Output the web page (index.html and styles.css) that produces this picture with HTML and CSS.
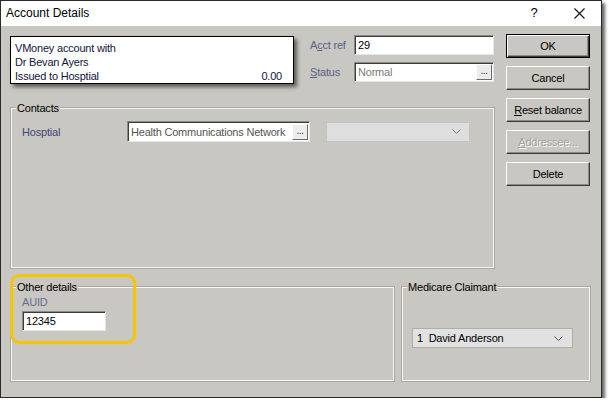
FILE: index.html
```html
<!DOCTYPE html>
<html>
<head>
<meta charset="utf-8">
<title>Account Details</title>
<link rel="stylesheet" href="styles.css">
</head>
<body>
<div class="window">
  <div class="titlebar">
    <span class="title">Account Details</span>
    <span class="tb-help">?</span>
    <span class="tb-close"><svg width="11" height="11" viewBox="0 0 11 11"><path d="M0.5 0.5 L10.5 10.5 M10.5 0.5 L0.5 10.5" stroke="#111" stroke-width="1.1" fill="none"/></svg></span>
  </div>
  <div class="content">
    <div class="top">
      <div class="left">
        <div class="row1">
          <div class="infobox">
            <div>VMoney account with</div>
            <div>Dr Bevan Ayers</div>
            <div class="line3"><span>Issued to Hosptial</span><span>0.00</span></div>
          </div>
          <div class="fields">
            <div class="frow">
              <span class="lbl">A<u>c</u>ct ref</span>
              <div class="field"><span class="ftext">29</span></div>
            </div>
            <div class="frow">
              <span class="lbl"><u>S</u>tatus</span>
              <div class="field"><span class="ftext muted">Normal</span><span class="dots">...</span></div>
            </div>
          </div>
        </div>
        <fieldset class="group contacts">
          <legend>Contacts</legend>
          <div class="contacts-body">
            <span class="lbl hosp">Hosptial</span>
            <div class="field wide"><span class="ftext grey">Health Communications Network</span><span class="dots">...</span></div>
            <div class="select disabled"><span class="stext"></span><svg class="chev" width="9" height="5" viewBox="0 0 9 5"><path d="M0.5 0.5 L4.5 4.5 L8.5 0.5" stroke="#777" fill="none"/></svg></div>
          </div>
        </fieldset>
      </div>
      <div class="buttons">
        <div class="btn default">OK</div>
        <div class="btn">Cancel</div>
        <div class="btn"><u>R</u>eset balance</div>
        <div class="btn off"><u>A</u>ddressee...</div>
        <div class="btn">Delete</div>
      </div>
    </div>
    <div class="bottom">
      <fieldset class="group other">
        <legend>Other details</legend>
        <div class="other-body">
          <div class="lbl auid">AUID</div>
          <div class="field auid-field"><span class="ftext">12345</span></div>
        </div>
      </fieldset>
      <fieldset class="group medicare">
        <legend>Medicare Claimant</legend>
        <div class="medicare-body">
          <div class="select claimant"><span class="stext">1&nbsp;&nbsp;David Anderson</span><svg class="chev" width="9" height="5" viewBox="0 0 9 5"><path d="M0.5 0.5 L4.5 4.5 L8.5 0.5" stroke="#555" fill="none"/></svg></div>
        </div>
      </fieldset>
    </div>
  </div>
  <div class="highlight"></div>
</div>
</body>
</html>
```
FILE: styles.css
```css
* { box-sizing: border-box; }
html, body { margin: 0; padding: 0; background: #ffffff; }
body {
  font-family: "Liberation Sans", Arial, sans-serif;
  font-size: 11px;
  line-height: 14px;
  letter-spacing: -0.2px;
  color: #000;
}
.window {
  position: relative;
  width: 602px;
  height: 398px;
  border: 1px solid #2a2a2a;
  background: #c9c7c1;
  box-shadow: 3px 3px 3px 0 rgba(0,0,0,0.6);
}
.titlebar {
  height: 25px;
  background: #ffffff;
  display: flex;
  align-items: center;
  padding: 0 7px 0 5px;
}
.title { font-size: 12px; letter-spacing: 0; color: #000; margin-top: -1px; }
.tb-help {
  margin-left: auto;
  width: 28px;
  text-align: center;
  font-size: 13px;
  margin-top: -1px;
}
.tb-close {
  width: 30px;
  margin-left: 16px;
  display: flex;
  justify-content: center;
  align-items: center;
  height: 25px;
}
.tb-close svg { display: block; margin-top: -1px; }

.content { padding: 8px 10px 0 10px; }
.top { display: flex; }
.left { width: 483px; }
.row1 { display: flex; height: 50px; }
.infobox {
  margin-top: 2px;
  margin-left: -1px;
  width: 284px;
  height: 48px;
  background: #fff;
  border: 1px solid #000;
  box-shadow: 3px 3px 4px rgba(0,0,0,0.55);
  padding: 4px 11px 0 4px;
  color: #141438;
}
.line3 { display: flex; justify-content: space-between; }
.fields {
  margin-left: 16px;
  margin-top: 1px;
  display: flex;
  flex-direction: column;
  gap: 7px;
}
.frow { display: flex; align-items: center; height: 20px; }
.lbl { color: #5a5e88; }
.frow .lbl { width: 44px; }
.field {
  height: 20px;
  width: 140px;
  background: #fff;
  border: 1px solid;
  border-color: #8a8a8a #e6e6e6 #e6e6e6 #8a8a8a;
  box-shadow: inset 1px 1px 0 #3c3c3c;
  display: flex;
  align-items: center;
  padding: 0 1px 0 3px;
}
.ftext { flex: 1; white-space: nowrap; overflow: hidden; }
.muted { color: #7a7a7a; }
.grey { color: #555; }
.dots {
  width: 16px;
  height: 16px;
  flex: none;
  background: #ececec;
  border: 1px solid;
  border-color: #fff #6a6a6a #6a6a6a #fff;
  font-size: 10px;
  line-height: 12px;
  text-align: center;
  color: #333;
  letter-spacing: -0.5px;
}

.group {
  margin: 0;
  padding: 0;
  min-width: 0;
  border: 1px solid #f6f6f4;
  box-shadow: 0 0 0 1px #a9a7a1;
}
.group legend {
  padding: 0 1px;
  margin-left: 4px;
  line-height: 14px;
  background: #c9c7c1;
}
.contacts { margin-top: 17px; height: 167px; }
.contacts-body {
  padding: 6px 0 0 10px;
  display: flex;
  align-items: center;
}
.hosp { width: 105px; color: #3e4678; }
.field.wide { width: 183px; height: 21px; }
.select {
  height: 20px;
  border: 1px solid #adadad;
  background: #e1e1e1;
  display: flex;
  align-items: center;
  padding: 0 8px 0 4px;
}
.select.disabled {
  width: 144px;
  margin-left: 16px;
  border-color: #c2c2c2;
  background: #dedede;
}
.stext { flex: 1; white-space: nowrap; }
.chev { display: block; flex: none; }

.buttons {
  margin-left: 12px;
  width: 84px;
  display: flex;
  flex-direction: column;
  gap: 8px;
}
.btn {
  height: 24px;
  border: 1px solid;
  border-color: #fff #3a3a3a #3a3a3a #fff;
  box-shadow: inset -1px -1px 0 #8c8a85;
  display: flex;
  align-items: center;
  justify-content: center;
  white-space: nowrap;
}
.btn.default {
  border-color: #000;
  box-shadow: inset 1px 1px 0 #fff, inset -1px -1px 0 #3a3a3a, inset -2px -2px 0 #8c8a85;
}
.btn.off { color: #a3a19c; text-shadow: 1px 1px 0 #fff; }

.bottom { display: flex; gap: 8px; margin-top: 12px; }
.other { width: 383px; height: 101px; }
.medicare { width: 188px; height: 101px; }
.other-body { padding: 1px 0 0 10px; }
.auid { color: #6a6e92; }
.auid-field { width: 84px; margin-top: 2px; }
.medicare-body { padding: 34px 0 0 9px; }
.claimant { width: 161px; padding-right: 9px; }

.highlight {
  position: absolute;
  left: 9px;
  top: 273px;
  width: 126px;
  height: 70px;
  border: 3px solid #f6c400;
  border-radius: 9px;
}
```
